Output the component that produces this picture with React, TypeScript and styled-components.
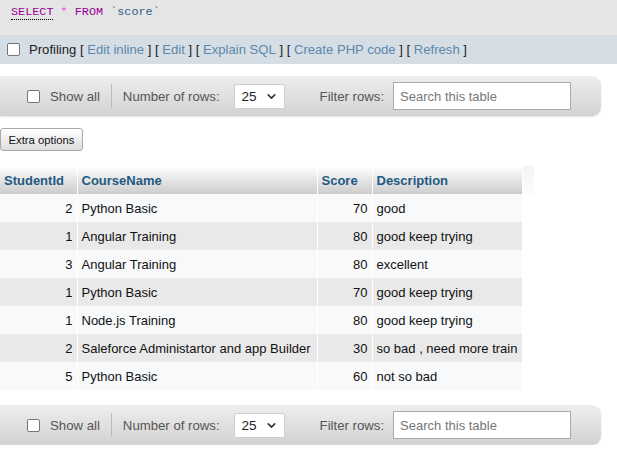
import React from 'react';
import styled, { createGlobalStyle } from 'styled-components';
import { ChevronDown } from 'lucide-react';

const GlobalStyle = createGlobalStyle`
  body {
    margin: 0;
    background: #fff;
    font-family: "Liberation Sans", Arial, sans-serif;
    font-size: 13px;
    color: #000;
  }
`

type RowType = {
  id: number
  course: string
  score: number
  desc: string
}

const rows: RowType[] = [
  { id: 2, course: 'Python Basic', score: 70, desc: 'good' },
  { id: 1, course: 'Angular Training', score: 80, desc: 'good keep trying' },
  { id: 3, course: 'Angular Training', score: 80, desc: 'excellent' },
  { id: 1, course: 'Python Basic', score: 70, desc: 'good keep trying' },
  { id: 1, course: 'Node.js Training', score: 80, desc: 'good keep trying' },
  { id: 2, course: 'Saleforce Administartor and app Builder', score: 30, desc: 'so bad , need more train' },
  { id: 5, course: 'Python Basic', score: 60, desc: 'not so bad' },
]

const colWidths = [77, 240, 55, 150, 12]

const SqlBox = styled.div`
  height: 35px;
  background: #e5e5e5;
  padding: 5px 0 0 11px;
  box-sizing: border-box;
  font-family: "Liberation Mono", monospace;
  font-size: 11.8px;
  line-height: 14px;
`

const Kw = styled.span<{ $dotted?: boolean }>`
  color: #990099;
  border-bottom: ${p => (p.$dotted ? '1px dotted #000' : 'none')};
`

const Star = styled.span`
  color: #ff44dd;
`

const Quoted = styled.span`
  color: #2f5f8a;
`

const ProfilingBar = styled.div`
  height: 29px;
  background: #d5dde5;
  display: flex;
  align-items: center;
  padding-left: 7px;
  white-space: pre;
  font-size: 13.1px;
  color: #222;
`

const Check = styled.span`
  display: inline-block;
  width: 11px;
  height: 11px;
  border: 1px solid #767676;
  border-radius: 2px;
  background: #fff;
  flex-shrink: 0;
`

const ProfilingLabel = styled.span`
  margin-left: 9px;
`

const LinkText = styled.span`
  color: #5d87ab;
`

const NavBar = styled.div<{ $top: number }>`
  margin-top: ${p => p.$top}px;
  width: 601px;
  height: 40px;
  box-sizing: border-box;
  border-radius: 0 9px 9px 0;
  background: linear-gradient(#eeeeee, #d2d2d2);
  box-shadow: 0 1px 2px rgba(0, 0, 0, 0.12);
  display: flex;
  align-items: center;
  padding-left: 27px;
  color: #555;
  font-size: 13.2px;
`

const NavLabel = styled.span<{ $ml: number }>`
  margin-left: ${p => p.$ml}px;
  white-space: nowrap;
`

const Divider = styled.span`
  width: 1px;
  height: 24px;
  background: #bbb;
  margin-left: 11px;
`

const FakeSelect = styled.div`
  margin-left: 14px;
  width: 51px;
  height: 25px;
  box-sizing: border-box;
  background: #fff;
  border: 1px solid #cfcfcf;
  border-radius: 2px;
  display: flex;
  align-items: center;
  justify-content: space-between;
  padding: 0 6px 0 7px;
  color: #222;
  font-size: 13.5px;
`

const SearchInput = styled.input`
  margin-left: 9px;
  width: 178px;
  height: 28px;
  box-sizing: border-box;
  border: 1px solid #aaa;
  padding: 0 6px;
  font-family: "Liberation Sans", Arial, sans-serif;
  font-size: 13px;
  outline: none;
  &::placeholder {
    color: #777;
  }
`

const ExtraButton = styled.button`
  margin-top: 12px;
  display: block;
  height: 23px;
  width: 83px;
  padding: 0;
  border: 1px solid #aaa;
  border-radius: 3px;
  background: linear-gradient(#ffffff, #dddddd);
  font-family: "Liberation Sans", Arial, sans-serif;
  font-size: 11.3px;
  color: #111;
`

const Table = styled.table`
  margin-top: 15px;
  width: ${colWidths.reduce((a, b) => a + b, 0)}px;
  border-collapse: collapse;
  table-layout: fixed;
  font-size: 13px;
`

const Col = styled.col<{ $w: number }>`
  width: ${p => p.$w}px;
`

const Th = styled.th`
  height: 28px;
  padding: 0 4px;
  text-align: left;
  font-weight: bold;
  color: #235a81;
  background: linear-gradient(#ffffff, #cccccc);
  border-right: 1px solid #fff;
  white-space: nowrap;
  overflow: hidden;
`

const GhostTh = styled.th`
  padding: 0;
  background: linear-gradient(#f2f4f7, #fafbfc);
`

const Tr = styled.tr<{ $even: boolean }>`
  height: 28px;
  background: ${p => (p.$even ? '#e9e9e9' : '#f7f9fb')};
`

const Td = styled.td<{ $right?: boolean }>`
  padding: 0 4px;
  text-align: ${p => (p.$right ? 'right' : 'left')};
  white-space: nowrap;
  overflow: hidden;
  color: #111;
  border-right: 1px solid transparent;
`

const GhostTd = styled.td`
  background: #fff;
  padding: 0;
`

function Nav({ top }: { top: number }) {
  return <NavBar $top={top}>
    <Check />
    <NavLabel $ml={10}>Show all</NavLabel>
    <Divider />
    <NavLabel $ml={11}>Number of rows:</NavLabel>
    <FakeSelect>
      <span>25</span>
      <ChevronDown size={13} strokeWidth={3} color="#333" />
    </FakeSelect>
    <NavLabel $ml={35}>Filter rows:</NavLabel>
    <SearchInput placeholder="Search this table" />
  </NavBar>
}

export default function App() {
  return <>
    <GlobalStyle />
    <SqlBox>
      <Kw $dotted>SELECT</Kw> <Star>*</Star> <Kw>FROM</Kw> <Quoted>`score`</Quoted>
    </SqlBox>
    <ProfilingBar>
      <Check />
      <ProfilingLabel>Profiling</ProfilingLabel>
      {' [ '}<LinkText>Edit inline</LinkText>{' ] [ '}<LinkText>Edit</LinkText>
      {' ] [ '}<LinkText>Explain SQL</LinkText>{' ] [ '}<LinkText>Create PHP code</LinkText>
      {' ] [ '}<LinkText>Refresh</LinkText>{' ]'}
    </ProfilingBar>
    <Nav top={12} />
    <ExtraButton>Extra options</ExtraButton>
    <Table>
      <colgroup>
        {colWidths.map((w, i) => <Col key={i} $w={w} />)}
      </colgroup>
      <thead>
        <tr>
          <Th>StudentId</Th>
          <Th>CourseName</Th>
          <Th>Score</Th>
          <Th>Description</Th>
          <GhostTh />
        </tr>
      </thead>
      <tbody>
        {rows.map((r, i) => (
          <Tr key={i} $even={i % 2 === 1}>
            <Td $right>{r.id}</Td>
            <Td>{r.course}</Td>
            <Td $right>{r.score}</Td>
            <Td>{r.desc}</Td>
            <GhostTd />
          </Tr>
        ))}
      </tbody>
    </Table>
    <Nav top={15} />
  </>
}
